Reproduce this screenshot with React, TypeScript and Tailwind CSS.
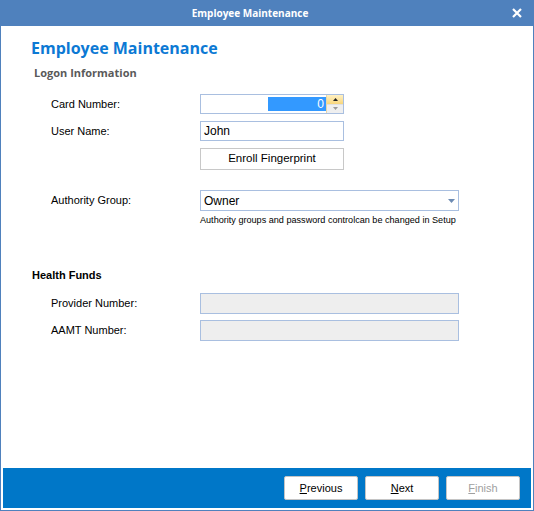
import React from "react"

const sans = { fontFamily: '"Liberation Sans", Arial, sans-serif' }
const ui = { fontFamily: '"Open Sans", "Noto Sans", sans-serif' }

function Row({ label, children, className = "" }: { label: string; children: React.ReactNode; className?: string }) {
  return (
    <div className={`flex items-center ${className}`}>
      <div className="w-[169px] pl-[20px] text-[11px] text-black">{label}</div>
      {children}
    </div>
  )
}

function FooterButton({ label, disabled = false }: { label: string; disabled?: boolean }) {
  return (
    <button
      className={`w-[74px] h-[24px] bg-white border border-[#c4c4c4] rounded-[2px] text-[11px] ${
        disabled ? "text-[#a0a0a0]" : "text-black"
      }`}
    >
      <span className="underline underline-offset-[1px]">{label[0]}</span>
      {label.slice(1)}
    </button>
  )
}

export default function App() {
  return (
    <div className="w-[534px] h-[511px] flex flex-col bg-white border-x border-b border-[#4f81bd] overflow-hidden" style={sans}>
      {/* Title bar */}
      <div className="h-[26px] -mx-px bg-[#4f81bd] flex items-center justify-center pr-[34px] relative shrink-0">
        <span className="text-white text-[10px] font-bold" style={ui}>Employee Maintenance</span>
        <svg className="absolute right-[12px] top-[8px]" width="10" height="10" viewBox="0 0 10 10">
          <path d="M1 1 L9 9 M9 1 L1 9" stroke="white" strokeWidth="2.2" />
        </svg>
      </div>

      <div className="flex-1 flex flex-col px-[2px] pb-[2px]">
        <div className="flex-1 flex flex-col pl-[28px]">
          <h1 className="mt-[10px] h-[24px] leading-[24px] text-[16px] font-bold text-[#0c79d4]" style={ui}>
            Employee Maintenance
          </h1>
          <div className="mt-[5px] pl-[3px] h-[16px] leading-[16px] text-[11px] font-bold text-[#5a5a5a]" style={ui}>
            Logon Information
          </div>

          <Row label="Card Number:" className="mt-[13px] h-[20px]">
            <div className="w-[144px] h-[20px] border border-[#a9bfe0] flex items-stretch">
              <div className="flex-1 flex items-center justify-end py-[2px] pl-[67px]">
                <div className="h-full flex-1 bg-[#3399ff] text-white text-[12px] leading-[14px] text-right pr-[2px]">0</div>
              </div>
              <div className="w-[17px] flex flex-col border-l border-[#e8d7a8]">
                <div className="flex-1 bg-gradient-to-b from-[#fff1c4] to-[#f8d67a] flex items-center justify-center">
                  <svg width="5" height="3" viewBox="0 0 5 3"><path d="M0 3 L2.5 0 L5 3 Z" fill="#222" /></svg>
                </div>
                <div className="flex-1 bg-[#efefef] border-t border-[#e0e0e0] flex items-center justify-center">
                  <svg width="5" height="3" viewBox="0 0 5 3"><path d="M0 0 L5 0 L2.5 3 Z" fill="#9a9a9a" /></svg>
                </div>
              </div>
            </div>
          </Row>

          <Row label="User Name:" className="mt-[7px] h-[20px]">
            <div className="w-[144px] h-[20px] border border-[#a9bfe0] flex items-center px-[3px] text-[12px] text-black">
              John
            </div>
          </Row>

          <Row label="" className="mt-[7px] h-[22px]">
            <button className="w-[144px] h-[22px] border border-[#c8c8c8] bg-white text-[11.5px] text-black">
              Enroll Fingerprint
            </button>
          </Row>

          <Row label="Authority Group:" className="mt-[20px] h-[21px]">
            <div className="w-[259px] h-[21px] border border-[#a9bfe0] flex items-center pl-[3px] pr-[3px] text-[12px] text-black">
              <span className="flex-1">Owner</span>
              <svg width="7" height="4" viewBox="0 0 7 4"><path d="M0 0 L7 0 L3.5 4 Z" fill="#6d8bb3" /></svg>
            </div>
          </Row>
          <div className="pl-[169px] mt-[3px] h-[12px] leading-[12px] text-[9.1px] text-black">
            Authority groups and password controlcan be changed in Setup
          </div>

          <div className="mt-[41px] pl-[1px] h-[16px] leading-[16px] text-[11px] font-bold text-black">Health Funds</div>

          <Row label="Provider Number:" className="mt-[10px] h-[21px]">
            <div className="w-[259px] h-[21px] border border-[#a9bfe0] bg-[#eeeeee]" />
          </Row>
          <Row label="AAMT Number:" className="mt-[6px] h-[21px]">
            <div className="w-[259px] h-[21px] border border-[#a9bfe0] bg-[#eeeeee]" />
          </Row>
        </div>

        {/* Footer */}
        <div className="h-[40px] bg-[#0077c8] flex items-center justify-end gap-[7px] pr-[11px] shrink-0">
          <FooterButton label="Previous" />
          <FooterButton label="Next" />
          <FooterButton label="Finish" disabled />
        </div>
      </div>
    </div>
  )
}
